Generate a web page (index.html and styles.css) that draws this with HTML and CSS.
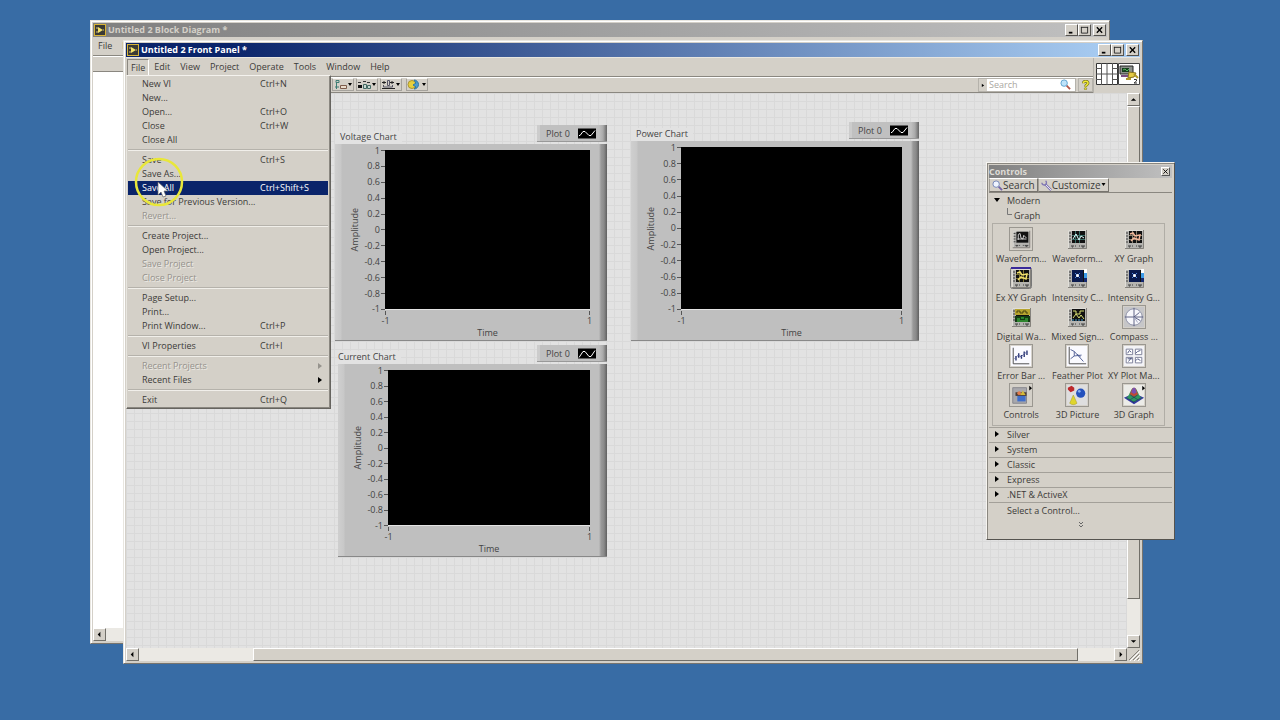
FILE: index.html
```html
<!DOCTYPE html>
<html lang="en">
<head>
<meta charset="utf-8">
<title>Untitled 2 Front Panel</title>
<link rel="stylesheet" href="styles.css">
</head>
<body>
<svg class="defs" aria-hidden="true">
  <defs>
    <symbol id="vi" viewBox="0 0 12 12"><rect x=".5" y=".5" width="11" height="11" fill="#3a3a34" stroke="#d8b437"/><path d="M4 3v6l5-3z" fill="#f4e36a"/><path d="M2 4h2M2 8h2M9 6h1" stroke="#d8c080"/></symbol>
    <symbol id="gbase" viewBox="0 0 24 24"><path d="M3 3h19v19H3z" fill="#b5b4b0"/><path d="M3.500 21.500V3.500h18" stroke="#e0ded8" fill="none"/><path d="M3 21.500h18.500V3" stroke="#85827c" fill="none"/><path d="M4 6h2M4 9h2M4 12h2M4 15h2M6 19h3M10 19h1M14 19h1M16 19h4M7 20h1M17 20h2" stroke="#3c3c3c"/><path d="M7 4h13v12H7z" fill="#111"/></symbol>
    <symbol id="lens" viewBox="0 0 12 12"><path d="M7.200 7.200L11 11" stroke="#7161a8" stroke-width="2"/><circle cx="4.500" cy="4.500" r="3.500" fill="#eef4ff" stroke="#6d80b4"/></symbol>
    <symbol id="wave" viewBox="0 0 18 10"><path d="M0 0h18v10H0z"/><path d="M1 7h1l3-4h2l4 4h2l4-5" fill="none" stroke="#fff"/></symbol>
  </defs>
</svg>
<main class="desktop">

  <section class="window back" aria-label="Block Diagram">
    <header class="titlebar">
      <svg class="vi-icon"><use href="#vi"/></svg>
      <h1 class="title">Untitled 2 Block Diagram *</h1>
      <button class="cap" aria-label="Minimize"><svg viewBox="0 0 10 9"><path d="M2 7.500h4" stroke="#000" stroke-width="2"/></svg></button>
      <button class="cap" aria-label="Maximize"><svg viewBox="0 0 10 9"><path d="M1.500 1v7h7V1M1 1.500h8" fill="none" stroke="#222"/></svg></button>
      <button class="cap close" aria-label="Close"><svg viewBox="0 0 10 9"><path d="M2 1.500l6 6M8 1.500l-6 6" stroke="#000" stroke-width="1.500"/></svg></button>
    </header>
    <nav class="menubar"><button>File</button><button>Edit</button></nav>
    <div class="toolbar"></div>
    <div class="sheet">
      <div class="diagram"></div>
      <div class="hscroll"><button class="sbtn" aria-label="Scroll left"><svg viewBox="0 0 10 10"><path d="M6 2v6L3 5z"/></svg></button></div>
    </div>
  </section>

  <section class="window front" aria-label="Front Panel">
    <header class="titlebar">
      <svg class="vi-icon"><use href="#vi"/></svg>
      <h1 class="title">Untitled 2 Front Panel *</h1>
      <button class="cap" aria-label="Minimize"><svg viewBox="0 0 10 9"><path d="M2 7.500h4" stroke="#000" stroke-width="2"/></svg></button>
      <button class="cap" aria-label="Maximize"><svg viewBox="0 0 10 9"><path d="M1.500 1v7h7V1M1 1.500h8" fill="none" stroke="#222"/></svg></button>
      <button class="cap close" aria-label="Close"><svg viewBox="0 0 10 9"><path d="M2 1.500l6 6M8 1.500l-6 6" stroke="#000" stroke-width="1.500"/></svg></button>
    </header>
    <div class="head">
      <div class="bars">
        <nav class="menubar">
          <button class="open">File</button><button>Edit</button><button>View</button><button>Project</button><button>Operate</button><button>Tools</button><button>Window</button><button>Help</button>
        </nav>
        <div class="toolbar tools">
          <button class="tool" aria-label="Align Objects"><svg viewBox="0 0 20 11"><path d="M3 1.500h3v2H3zM3.500 4v6M2 8h4" fill="none" stroke="#3d7d74"/><path d="M7.500 6.500h6v3h-6z" fill="#eadccb" stroke="#7c5c4c"/><path d="M15 4h4l-2 3z"/></svg></button>
          <button class="tool" aria-label="Distribute Objects"><svg viewBox="0 0 20 11"><path d="M1 3.500h3M6 2.500h3M10 3.500h3" stroke="#333"/><path d="M1 6h4v3H1z" fill="#111"/><path d="M6.500 5.500h3v4h-3zM10.500 6.500h3v3h-3z" fill="#c9d9d2" stroke="#456b64"/><path d="M15 4h4l-2 3z"/></svg></button>
          <button class="tool" aria-label="Resize Objects"><svg viewBox="0 0 20 11"><path d="M1 3.500h4M9 3.500h4M3 2v3M11 2v3M1 9.500h13" stroke="#222"/><path d="M6.500 1.500h2v5h-2zM2.500 6v2h9V6" fill="none" stroke="#556"/><path d="M15 4h4l-2 3z"/></svg></button>
          <button class="tool order" aria-label="Reorder"><svg viewBox="0 0 20 11"><circle cx="5" cy="5.500" r="4" fill="#e6cf3e" stroke="#aa9430"/><path d="M7 1a4.500 4.500 0 010 9l2-2-3-2 3-2z" fill="#4b9bd0" stroke="#3077a2"/><path d="M15 4h4l-2 3z"/></svg></button>
          <div class="search">
            <button class="hist" aria-label="Search options"><svg viewBox="0 0 5 9"><path d="M1 3v4l3-2z"/></svg></button>
            <input type="text" aria-label="Search" placeholder="Search">
            <svg class="glass" viewBox="0 0 12 12"><path d="M7 7l4 4" stroke="#b2574b" stroke-width="2"/><circle cx="4.500" cy="4.500" r="3.500" fill="#bfe3fa" stroke="#5ba0cd"/></svg>
          </div>
          <button class="help" aria-label="Context Help"><svg viewBox="0 0 12 12"><path d="M3.500 4c0-3.500 5.500-3.300 5.500-.3C9 5.700 6.500 5.400 6 8" fill="none" stroke="#75711d" stroke-width="3.500"/><path d="M3.500 4c0-3.500 5.500-3.300 5.500-.3C9 5.700 6.500 5.400 6 8" fill="none" stroke="#f2ed35" stroke-width="1.800"/><circle cx="6" cy="10.500" r="1.400" fill="#e8e02e" stroke="#75711d" stroke-width=".7"/></svg></button>
        </div>
      </div>
      <div class="pane">
        <svg viewBox="0 0 22 22"><path d="M.5.5h21v21H.5z" fill="#fff" stroke="#333"/><path d="M5.500 0v22M11 0v22M16.500 0v22M0 11h22M0 5.500h5.500M0 16.500h5.500M16.500 5.500H22M16.500 16.500H22" stroke="#555"/></svg>
        <svg viewBox="0 0 22 22"><path d="M.5.500h21v21H.5z" fill="#fff" stroke="#444"/><path d="M2 3h13v8H2z" fill="#8d928d" stroke="#222"/><path d="M4 5h7v4H4z" fill="#173e1f"/><path d="M5 7l2-1 2 2 2-2" fill="none" stroke="#52b55a"/><path d="M3 13h7" stroke="#7b4d83" stroke-width="2"/><path d="M11 9l7 1-2 4-6 1z" fill="#e4cb45" stroke="#86701d"/><path d="M16 11l4 4M8 16h5" stroke="#b09828" stroke-width="2"/><path d="M16 16.500h2.500V18L16 20h3" fill="none" stroke="#333"/></svg>
      </div>
    </div>
    <div class="body">
      <div class="canvas">
        <article class="chart voltage">
          <header class="chart-head"><h2>Voltage Chart</h2><div class="legend"><span>Plot 0</span><svg><use href="#wave"/></svg></div></header>
          <div class="frame">
            <div class="yaxis"><span class="ylabel">Amplitude</span><ol><li>1</li><li>0.8</li><li>0.6</li><li>0.4</li><li>0.2</li><li>0</li><li>-0.2</li><li>-0.4</li><li>-0.6</li><li>-0.8</li><li>-1</li></ol></div>
            <div class="plot"></div>
            <div class="xaxis"><ol><li>-1</li><li>1</li></ol><span>Time</span></div>
          </div>
        </article>
        <article class="chart power">
          <header class="chart-head"><h2>Power Chart</h2><div class="legend"><span>Plot 0</span><svg><use href="#wave"/></svg></div></header>
          <div class="frame">
            <div class="yaxis"><span class="ylabel">Amplitude</span><ol><li>1</li><li>0.8</li><li>0.6</li><li>0.4</li><li>0.2</li><li>0</li><li>-0.2</li><li>-0.4</li><li>-0.6</li><li>-0.8</li><li>-1</li></ol></div>
            <div class="plot"></div>
            <div class="xaxis"><ol><li>-1</li><li>1</li></ol><span>Time</span></div>
          </div>
        </article>
        <article class="chart current">
          <header class="chart-head"><h2>Current Chart</h2><div class="legend"><span>Plot 0</span><svg viewBox="0 0 18 10"><path d="M0 0h18v10H0z"/><path d="M1 9l4-6h2l4 5h2l4-6" fill="none" stroke="#fff"/></svg></div></header>
          <div class="frame">
            <div class="yaxis"><span class="ylabel">Amplitude</span><ol><li>1</li><li>0.8</li><li>0.6</li><li>0.4</li><li>0.2</li><li>0</li><li>-0.2</li><li>-0.4</li><li>-0.6</li><li>-0.8</li><li>-1</li></ol></div>
            <div class="plot"></div>
            <div class="xaxis"><ol><li>-1</li><li>1</li></ol><span>Time</span></div>
          </div>
        </article>
      </div>
      <div class="vscroll">
        <button class="sbtn" aria-label="Scroll up"><svg viewBox="0 0 10 10"><path d="M2 6.500h6L5 3.500z"/></svg></button>
        <div class="thumb"></div><div class="track"></div>
        <button class="sbtn" aria-label="Scroll down"><svg viewBox="0 0 10 10"><path d="M2 3.500h6L5 6.500z"/></svg></button>
      </div>
      <div class="hscroll">
        <button class="sbtn" aria-label="Scroll left"><svg viewBox="0 0 10 10"><path d="M6 2v6L3 5z"/></svg></button>
        <div class="track lead"></div><div class="thumb"></div><div class="track trail"></div>
        <button class="sbtn" aria-label="Scroll right"><svg viewBox="0 0 10 10"><path d="M4 2v6l3-3z"/></svg></button>
      </div>
      <svg class="grip" viewBox="0 0 13 13"><path d="M2 12L12 2M6 12l6-6M10 12l2-2" stroke="#85827b"/><path d="M3 13L13 3M7 13l6-6M11 13l2-2" stroke="#fff"/></svg>
    </div>

    <div class="menu" role="menu">
      <button role="menuitem"><span>New VI</span><kbd>Ctrl+N</kbd></button>
      <button role="menuitem"><span>New...</span></button>
      <button role="menuitem"><span>Open...</span><kbd>Ctrl+O</kbd></button>
      <button role="menuitem"><span>Close</span><kbd>Ctrl+W</kbd></button>
      <button role="menuitem"><span>Close All</span></button>
      <hr>
      <button role="menuitem"><span>Save</span><kbd>Ctrl+S</kbd></button>
      <button role="menuitem"><span>Save As...</span></button>
      <button role="menuitem" class="active"><span>Save All</span><kbd>Ctrl+Shift+S</kbd></button>
      <button role="menuitem"><span>Save for Previous Version...</span></button>
      <button role="menuitem" disabled><span>Revert...</span></button>
      <hr>
      <button role="menuitem"><span>Create Project...</span></button>
      <button role="menuitem"><span>Open Project...</span></button>
      <button role="menuitem" disabled><span>Save Project</span></button>
      <button role="menuitem" disabled><span>Close Project</span></button>
      <hr>
      <button role="menuitem"><span>Page Setup...</span></button>
      <button role="menuitem"><span>Print...</span></button>
      <button role="menuitem"><span>Print Window...</span><kbd>Ctrl+P</kbd></button>
      <hr>
      <button role="menuitem"><span>VI Properties</span><kbd>Ctrl+I</kbd></button>
      <hr>
      <button role="menuitem" disabled><span>Recent Projects</span><svg class="sub" viewBox="0 0 4 6"><path d="M0 0v6l4-3z" fill="currentColor"/></svg></button>
      <button role="menuitem"><span>Recent Files</span><svg class="sub" viewBox="0 0 4 6"><path d="M0 0v6l4-3z" fill="#000"/></svg></button>
      <hr>
      <button role="menuitem"><span>Exit</span><kbd>Ctrl+Q</kbd></button>
    </div>
  </section>

  <aside class="controls" aria-label="Controls">
    <header class="palette-title"><h2>Controls</h2><button aria-label="Close"><svg viewBox="0 0 8 8"><path d="M1.500 1.500l5 5M6.500 1.500l-5 5" stroke="#000"/></svg></button></header>
    <div class="palette-tools">
      <button><svg viewBox="0 0 12 12"><use href="#lens"/></svg>Search</button>
      <button><svg viewBox="0 0 12 12"><path d="M4.500 4.500L11 11" stroke="#8178b4" stroke-width="2.500"/><path d="M4.500 4.500L11 11" stroke="#f1efff"/><path d="M1 3a2.500 2.500 0 104-2" fill="none" stroke="#8178b4" stroke-width="1.500"/></svg>Customize<svg class="drop" viewBox="0 0 5 4"><path d="M.5 0h4L2.500 3z"/></svg></button>
    </div>
    <button class="cat first"><svg viewBox="0 0 6 6"><path d="M0 1h6L3 5z"/></svg>Modern</button>
    <div class="branch"><svg viewBox="0 0 5 7"><path d="M.5 0v6.500H5" fill="none" stroke="#777"/></svg>Graph</div>
    <div class="palette">
      <button class="item"><svg class="boxed" viewBox="0 0 24 24"><use href="#gbase"/><path d="M9 13V7l2-1 1 5 2 1 1-4 3 3M8 12h10" fill="none" stroke="#ddd"/></svg>Waveform...</button>
      <button class="item"><svg viewBox="0 0 24 24"><use href="#gbase"/><path d="M10.500 4v12M14.500 4v12M7 8.500h13M7 12.500h13" stroke="#386b64"/><path d="M8 12l3-5 3 6 2-4 3 2" fill="none" stroke="#dff"/></svg>Waveform...</button>
      <button class="item"><svg viewBox="0 0 24 24"><use href="#gbase"/><path d="M10.500 4v12M14.500 4v12M7 8.500h13M7 12.500h13" stroke="#8a8270"/><path d="M8 7l3-1 2 3 5-1-1 5-5-2-3 3" fill="none" stroke="#f2b89a" stroke-width="1.500"/></svg>XY Graph</button>
      <button class="item"><svg viewBox="0 0 24 24"><use href="#gbase"/><path d="M10.500 4v12M14.500 4v12M7 8.500h13M7 12.500h13" stroke="#817633"/><path d="M8 7l3-1 2 3 5-1-1 5-5-2-3 3" fill="none" stroke="#f0df6c" stroke-width="1.500"/><rect x="1.500" y="1.500" width="21" height="21" rx="2" fill="none" stroke="#777"/><path d="M2 2h20" stroke="#3a2a9a" stroke-width="2"/></svg>Ex XY Graph</button>
      <button class="item"><svg viewBox="0 0 24 24"><use href="#gbase"/><path d="M7 4h11v12H7z" fill="#0b1b4e"/><path d="M10 7l5 5M15 7l-5 5" stroke="#4d85e0"/><circle cx="12.500" cy="9.500" r="1.500" fill="#fff"/><path d="M19 3h3v5h-3z" fill="#fff"/><path d="M19 7h3v5h-3z" fill="#3c9be8"/><path d="M19 12h3v4h-3z" fill="#13286f"/></svg>Intensity C...</button>
      <button class="item"><svg viewBox="0 0 24 24"><use href="#gbase"/><path d="M7 4h11v12H7z" fill="#0b1b4e"/><path d="M10 7l5 5M15 7l-5 5" stroke="#4d85e0"/><circle cx="12.500" cy="9.500" r="1.500" fill="#fff"/><path d="M19 3h3v5h-3z" fill="#fff"/><path d="M19 7h3v5h-3z" fill="#3c9be8"/><path d="M19 12h3v4h-3z" fill="#13286f"/></svg>Intensity G...</button>
      <button class="item"><svg viewBox="0 0 24 24"><use href="#gbase"/><path d="M6 4h15v6H6z" fill="#b7a42f"/><path d="M8 8V6h3v2h3V6h3v2h2" fill="none" stroke="#4a4510"/><path d="M6 11h15v6H6z" fill="#143b14"/><path d="M8 14h3M12 13h3M16 14h3M8 16h11" stroke="#48d048"/></svg>Digital Wa...</button>
      <button class="item"><svg viewBox="0 0 24 24"><use href="#gbase"/><path d="M8 6h3v3h4V6h4M8 13l3-4 3 4 2-3 3 4" fill="none" stroke="#d7df72"/><path d="M7 15h12" stroke="#3a9ad1" stroke-dasharray="2 1"/></svg>Mixed Sign...</button>
      <button class="item"><svg class="boxed" viewBox="0 0 24 24"><path d="M1 1h22v22H1z" fill="#c6c6c8"/><circle cx="12" cy="12" r="9" fill="#f7f7fb" stroke="#8b8ea5"/><path d="M2 12h20M12 2v20M12 12l6-5M12 12l7 4" stroke="#52567c"/><path d="M12 12l4 6" stroke="#9da2be"/></svg>Compass ...</button>
      <button class="item"><svg class="boxed" viewBox="0 0 24 24"><path d="M1 1h22v22H1z" fill="#fafaff"/><path d="M3.500 3v17.500H21" fill="none" stroke="#444"/><path d="M6.500 12v5M9.500 9v5M12.500 11v4M15.500 7v6M18.500 6v5" fill="none" stroke="#293470" stroke-width="1.500"/><path d="M5 15l4-4 3 2 4-4 3-1" fill="none" stroke="#5963a0"/></svg>Error Bar ...</button>
      <button class="item"><svg class="boxed" viewBox="0 0 24 24"><path d="M1 1h22v22H1z" fill="#fafaff"/><path d="M3.500 2v18.500H22" fill="none" stroke="#444"/><path d="M5 5l4 2v5M9 7l10 11M9 12l8-1M5 15l4-3M12 10l4 3" fill="none" stroke="#4b5a93"/></svg>Feather Plot</button>
      <button class="item"><svg class="boxed" viewBox="0 0 24 24"><path d="M1 1h22v22H1z" fill="#f3f3f6"/><path d="M3.500 4.500h7v6h-7zM13.500 4.500h7v6h-7zM3.500 13.500h7v6h-7zM13.500 13.500h7v6h-7z" fill="#fff" stroke="#777b95"/><path d="M5 9l2-3 2 2M14 9l2-2 3-1M5 15h5M6 18l3-4M14 17l2-2 3 2" fill="none" stroke="#47507c"/></svg>XY Plot Ma...</button>
      <button class="item"><svg class="boxed" viewBox="0 0 24 24"><path d="M3 4h15v17H3z" fill="#a8a8ad" stroke="#84848b"/><path d="M6 9h12v4H6z" fill="#4b3b31"/><circle cx="10" cy="10" r="2" fill="#e37b4b"/><path d="M11 12l3-5 3 5z" fill="#d3b93a"/><path d="M8 13h9v6H8z" fill="#3f6eca"/><path d="M21 2v5l3-2.500z"/></svg>Controls</button>
      <button class="item"><svg class="boxed" viewBox="0 0 24 24"><path d="M1 1h22v22H1z" fill="#dededf"/><path d="M2 4l4-2 3 2v3l-4 2-3-3z" fill="#bd292c"/><circle cx="16" cy="10" r="5" fill="#2451bd"/><circle cx="14.500" cy="8" r="1.500" fill="#83adf2"/><path d="M8 12l4 9c-2 2-6 2-8 0z" fill="#dfd52c" stroke="#9f931c" stroke-width=".5"/></svg>3D Picture</button>
      <button class="item"><svg class="boxed" viewBox="0 0 24 24"><path d="M1 1h22v22H1z" fill="#ecece8"/><path d="M1 15l11-5 11 5-11 7z" fill="#3336a1"/><path d="M3 15c4 0 5-11 9-11s5 11 9 11l-9 5z" fill="#2e9960"/><path d="M7 11c2-1 2-7 5-7s3 6 5 7l-5 3z" fill="#bc4b35"/><path d="M9 9c1-2 1-5 3-5s2 3 3 5l-3 2z" fill="#7b4fb0"/><path d="M4 15l8 5M8 12l8 5M20 15l-9 5M16 12l-8 5" stroke="#20235b" stroke-width=".6"/><path d="M21 2v5l3-2.500z"/></svg>3D Graph</button>
    </div>
    <nav class="cats">
      <button class="cat"><svg viewBox="0 0 6 6"><path d="M1 0v6l4-3z"/></svg>Silver</button>
      <button class="cat"><svg viewBox="0 0 6 6"><path d="M1 0v6l4-3z"/></svg>System</button>
      <button class="cat"><svg viewBox="0 0 6 6"><path d="M1 0v6l4-3z"/></svg>Classic</button>
      <button class="cat"><svg viewBox="0 0 6 6"><path d="M1 0v6l4-3z"/></svg>Express</button>
      <button class="cat"><svg viewBox="0 0 6 6"><path d="M1 0v6l4-3z"/></svg>.NET &amp; ActiveX</button>
      <button class="cat"><svg viewBox="0 0 6 6"></svg>Select a Control...</button>
    </nav>
    <button class="more" aria-label="Show more"><svg viewBox="0 0 6 6"><path d="M1 0l2 2 2-2M1 3l2 2 2-2" fill="none" stroke="#666"/></svg></button>
  </aside>

  <svg class="pointer" viewBox="0 0 50 50" aria-hidden="true"><circle cx="25" cy="25" r="23" fill="none" stroke="#e9e73a" stroke-width="2.500"/><path d="M24 25v13l3-3 2 5 3-1-2-5h4z" fill="#fff" stroke="#666" stroke-width=".7"/></svg>
</main>
</body>
</html>
```
FILE: styles.css
```css
* { box-sizing: border-box; }
body {
  margin: 0;
  font: 9px/12px "Open Sans", "Noto Sans", sans-serif;
  color: #3c3b39;
}
h1, h2, ol { margin: 0; padding: 0; font: inherit; list-style: none; }
button { padding: 0; border: 0; background: none; color: inherit; font: inherit; text-align: left; }
kbd { font: inherit; }
svg { display: block; }
.defs { position: absolute; width: 0; height: 0; }
.desktop { position: relative; height: 100vh; min-height: 600px; background: #386ca5; overflow: hidden; }

/* windows */
.window {
  position: absolute;
  display: flex;
  flex-direction: column;
  padding: 2px;
  background: #d4d0c8;
  border: 1px solid;
  border-color: #e8e6e0 #77746e #77746e #e8e6e0;
  box-shadow: inset 1px 1px #fff, inset -1px -1px #d4d0c8;
}
.back { inset: 20px 170px 76px 90px; }
.front { inset: 40px 137px 56px 123px; }
.titlebar { display: flex; align-items: center; height: 14px; padding-right: 1px; color: #fff; background: linear-gradient(90deg, #0a246a 10%, #a6caf0 96%); }
.back .titlebar { color: #d4d0c8; background: linear-gradient(90deg, #808080, #c0c0c0); }
.vi-icon { width: 12px; height: 12px; margin: 0 2px 0 1px; }
.title { flex: 1; font-weight: 700; }
.cap {
  width: 13px; height: 12px; padding: 1px;
  background: #d4d0c8;
  border: 1px solid;
  border-color: #fff #55534f #55534f #fff;
}
.cap.close { margin-left: 2px; }
.cap svg { width: 100%; height: 100%; }

.head { display: flex; border-top: 1px solid #e8e6e0; }
.bars { flex: 1; }
.menubar { display: flex; height: 18px; padding: 1px 0 0 1px; }
.back .menubar { padding-left: 0; }
.menubar button { height: 16px; padding: 0 5px; }
.menubar .open { padding: 0 3px; border: 1px solid; border-color: #8a8780 #fff #fff #8a8780; border-width: 1px 1px 0; }
.toolbar { height: 17px; border-top: 1px solid #8a8780; border-bottom: 1px solid #8a8780; box-shadow: inset 0 1px #fff; }
.tools { display: flex; align-items: center; padding-left: 206px; gap: 2px; }
.tool { width: 22px; height: 13px; border: 1px solid; border-color: #f8f7f3 #a5a29c #a5a29c #a5a29c; }
.tool svg { width: 20px; height: 11px; }
.order { margin-left: 2px; }
.search { display: flex; margin-left: auto; align-items: center; background: #fff; border: 1px solid #b5b2ab; height: 14px; width: 98px; }
.hist { width: 8px; height: 12px; padding: 2px; background: #d4d0c8; }
.hist svg { width: 4px; height: 8px; }
.search input { flex: 1; min-width: 0; height: 12px; padding: 0 2px; border: 0; background: none; font: inherit; }
.search input::placeholder { color: #aaa7a2; opacity: 1; }
.glass { width: 11px; height: 11px; margin-right: 4px; }
.help { width: 15px; height: 14px; padding: 1px; border: 1px solid #b5b2ab; }
.help svg { width: 11px; height: 10px; }
.pane { display: flex; padding: 5px 0 0 2px; height: 35px; border-left: 1px solid #b5b2ab; }
.pane svg { width: 22px; height: 22px; }

.sheet { flex: 1; display: flex; flex-direction: column; }
.diagram { flex: 1; background: #fff; }
.body { flex: 1; min-height: 0; display: grid; grid-template: 1fr 13px / 1fr 13px; }
.canvas {
  position: relative;
  overflow: hidden;
  background-color: #e2e2e2;
  background-image: linear-gradient(90deg, #d9d9d9 1px, transparent 1px), linear-gradient(#d9d9d9 1px, transparent 1px);
  background-size: 8px 8px;
}

/* scroll bars */
.vscroll, .hscroll { display: flex; background: #ebe9e4; }
.vscroll { flex-direction: column; }
.sbtn, .thumb { background: #d4d0c8; border: 1px solid; border-color: #fff #716f69 #716f69 #fff; }
.sbtn { flex: none; width: 13px; height: 13px; padding: 1px; }
.sbtn svg { width: 9px; height: 9px; }
.vscroll .thumb { flex: 492; }
.vscroll .track { flex: 36; }
.hscroll .lead { flex: 114; }
.hscroll .thumb { flex: 824; }
.hscroll .trail { flex: 36; }
.grip { width: 13px; height: 13px; background: #d4d0c8; }

/* charts placed freely on the panel canvas */
.chart { position: absolute; display: flex; flex-direction: column; color: #444; }
.voltage { left: 209px; top: 32px; width: 272px; height: 216px; }
.power { left: 505px; top: 29px; width: 288px; height: 219px; }
.current { left: 212px; top: 252px; width: 269px; height: 212px; }
.chart-head { display: flex; justify-content: space-between; height: 19px; }
.chart-head h2 { align-self: flex-end; padding: 0 5px 1px; background: #e2e2e2; }
.current h2 { padding-left: 0; }
.legend {
  display: flex; align-items: center; justify-content: space-between;
  width: 70px; height: 17px; padding: 1px 11px 0 9px;
  background: linear-gradient(90deg, #ccc 3px, #c0c0c0 3px calc(100% - 8px), #aaa calc(100% - 4px), #666);
  border-bottom: 1px solid #999;
}
.legend svg { width: 18px; height: 11px; }
.frame {
  flex: 1; min-height: 0;
  display: grid; grid-template: 6px 1fr 30px / 50px 1fr 17px;
  background: linear-gradient(90deg, #cfcfcf, #c8c8c8 6px, #bfbfbf 7px calc(100% - 8px), #999 calc(100% - 6px), #8a8a8a calc(100% - 3px), #5f5f5f);
  border-bottom: 1px solid #888;
}
.yaxis { grid-area: 2 / 1; display: flex; justify-content: space-between; align-items: center; padding-left: 14px; }
.ylabel { writing-mode: vertical-rl; transform: rotate(180deg); }
.yaxis ol { display: flex; flex-direction: column; justify-content: space-between; height: 100%; }
.yaxis li { display: flex; align-items: center; justify-content: flex-end; height: 1px; gap: 1px; white-space: nowrap; }
.yaxis li::after { content: ""; width: 4px; height: 1px; background: #555; }
.plot { grid-area: 2 / 2; background: #000; border-bottom: 1px solid #e4e4e4; }
.xaxis { grid-area: 3 / 2; text-align: center; }
.xaxis ol { display: flex; justify-content: space-between; padding-top: 1px; height: 17px; }
.xaxis li { display: flex; flex-direction: column; align-items: center; width: 1px; }
.xaxis li::before { content: ""; width: 1px; height: 4px; flex: none; background: #555; }
.xaxis span { display: block; }

/* file menu */
.menu {
  position: absolute; left: 2px; top: 34px;
  display: flex; flex-direction: column;
  width: 205px; padding: 1px 2px 1px 1px;
  background: #d4d0c8;
  border: 1px solid;
  border-color: #f4f2ee #66645f #66645f #e8e6e0;
  box-shadow: inset -1px -1px #8a8780;
}
.menu button { display: grid; grid-template-columns: 118px 1fr 10px; align-items: center; height: 14px; padding-left: 14px; white-space: nowrap; }
.menu .active { background: #0a246a; color: #fff; }
.menu button:disabled { color: #96938d; text-shadow: 1px 1px #eceae5; }
.menu hr { width: 100%; height: 2px; margin: 2px 0; border: 0; border-top: 1px solid #b5b2ab; border-bottom: 1px solid #f1efea; }
.sub { grid-column: 3; width: 4px; height: 6px; }

/* controls palette */
.controls {
  position: absolute; left: calc(100% - 294px); top: 162px; width: 189px; height: 378px;
  display: flex; flex-direction: column;
  padding: 2px;
  background: #d4d0c8;
  border: 1px solid; border-color: #f6f4f0 #55534f #55534f #f6f4f0;
  box-shadow: inset 1px 1px #8a8780;
}
.palette-title { display: flex; align-items: center; justify-content: space-between; height: 13px; padding-right: 2px; color: #dedbd5; background: linear-gradient(90deg, #808080, #c0c0c0); }
.palette-title h2 { font-weight: 700; }
.palette-title button { width: 9px; height: 9px; background: #d4d0c8; border: 1px solid #fff; border-right-color: #555; border-bottom-color: #555; }
.palette-title svg { width: 7px; height: 7px; }
.palette-tools { display: flex; height: 15px; border-bottom: 1px solid #8a8780; font-size: 10px; }
.palette-tools button { display: flex; align-items: center; padding: 0 2px; border: 1px solid; border-color: #fff #77746e #77746e #a19e97; }
.palette-tools svg { width: 11px; height: 11px; }
.palette-tools .drop { width: 5px; height: 4px; }
.cat { display: flex; align-items: center; gap: 7px; padding-left: 5px; height: 15px; border-bottom: 1px solid #a3a099; }
.cat svg { width: 6px; height: 6px; flex: none; margin-bottom: 2px; }
.cat:last-child, .cat.first { border-bottom: 0; }
.branch { display: flex; gap: 2px; height: 14px; padding-left: 18px; line-height: 15px; }
.branch svg { width: 5px; height: 7px; }
.palette {
  display: grid; grid-template-columns: repeat(3, 1fr);
  margin: 1px 7px 1px 3px; padding: 3px 2px 3px 0;
  border: 1px solid #b0ada6;
}
.item { display: flex; flex-direction: column; align-items: center; gap: 2px; height: 39px; white-space: nowrap; }
.item svg { width: 24px; height: 24px; flex: none; }
.item .boxed { border: 1px solid #9a9790; }
.cats { display: flex; flex-direction: column; border-top: 1px solid #a3a099; }
.more { display: flex; justify-content: center; padding-top: 4px; }
.more svg { width: 6px; height: 6px; }

.pointer { position: absolute; left: 134px; top: 157px; width: 50px; height: 50px; }
```
